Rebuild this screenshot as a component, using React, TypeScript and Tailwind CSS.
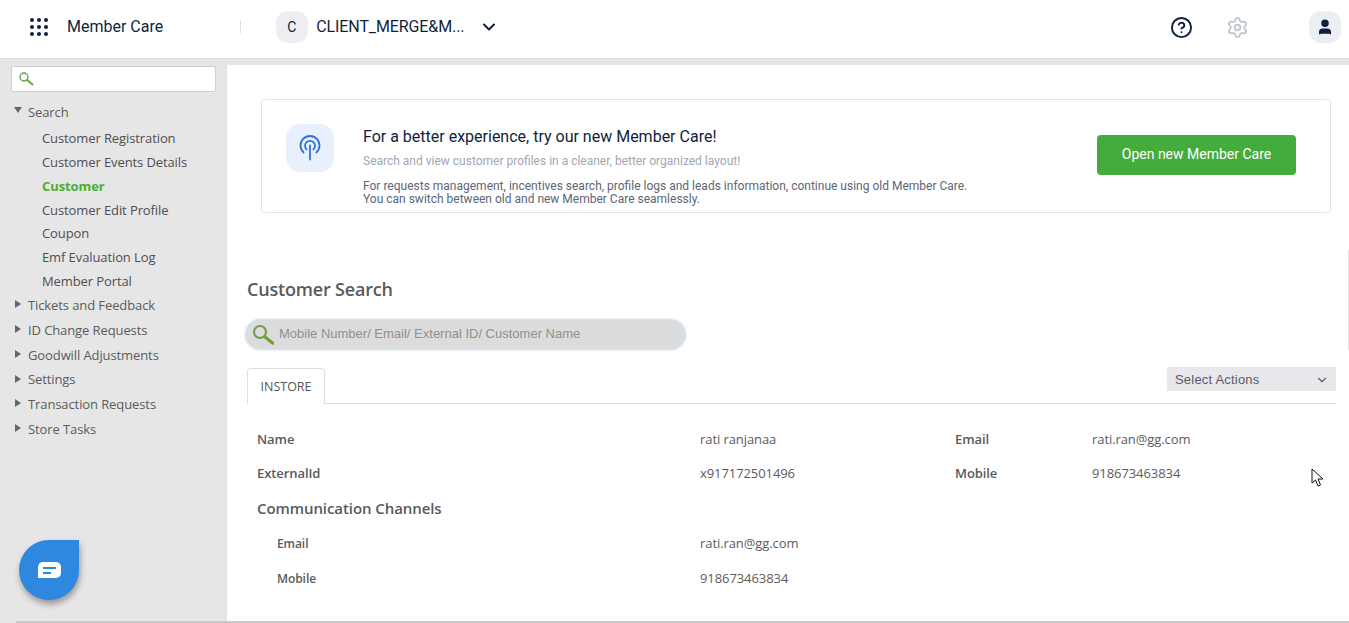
import React from 'react';
import { ChevronDown, CircleHelp, Settings, User } from 'lucide-react';

const sideItems = [
  { label: 'Customer Registration' },
  { label: 'Customer Events Details' },
  { label: 'Customer', active: true },
  { label: 'Customer Edit Profile' },
  { label: 'Coupon' },
  { label: 'Emf Evaluation Log' },
  { label: 'Member Portal' },
];

const sideGroups = ['Tickets and Feedback', 'ID Change Requests', 'Goodwill Adjustments', 'Settings', 'Transaction Requests', 'Store Tasks'];

const Lens: React.FC<{ size: number }> = ({ size }) => (
  <svg width={size} height={size} viewBox="0 0 16 16" fill="none">
    <circle cx="6" cy="6" r="4" stroke="#6f9e45" strokeWidth="1.4" />
    <path d="M9 9l5.5 4.5" stroke="#6aa32f" strokeWidth="2" strokeLinecap="round" />
  </svg>
);

const Sidebar = () => (
  <aside className="w-[227px] shrink-0 h-full bg-[#e6e6e6] pl-[11px] pt-px font-['Open_Sans',sans-serif] text-[13px] tracking-[-0.1px] text-[#5b5b5b]">
    <div className="w-[205px] h-[26px] bg-white border border-[#cfcfcf] rounded-[2px] flex items-center pl-1.5">
      <Lens size={16} />
    </div>
    <div className="mt-[11px] flex items-center h-5 pl-[3px]">
      <span className="w-0 h-0 border-l-[4px] border-r-[4px] border-t-[6px] border-l-transparent border-r-transparent border-t-[#666] mb-1.5" />
      <span className="ml-[6px]">Search</span>
    </div>
    <ul className="mt-[3px] pl-[31px] text-[#4e4e55]">
      {sideItems.map((it) => (
        <li key={it.label} className={`h-[23.85px] leading-[24px] ${it.active ? 'font-bold text-[#4caf32]' : ''}`}>{it.label}</li>
      ))}
    </ul>
    <ul className="pt-[0.4px]">
      {sideGroups.map((g) => (
        <li key={g} className="h-[24.8px] flex items-center pl-1">
          <span className="w-0 h-0 border-t-[4px] border-b-[4px] border-l-[6px] border-t-transparent border-b-transparent border-l-[#666] mb-[3px]" />
          <span className="ml-[7px]">{g}</span>
        </li>
      ))}
    </ul>
  </aside>
);

const Header = () => (
  <header className="h-[59px] pb-1 bg-white border-b border-[#dcdcdc] flex items-center font-['Roboto',sans-serif] text-[#0f1f3d]">
    <div className="ml-[30px] grid grid-cols-3 gap-[3px] w-[18px]">
      {Array.from({ length: 9 }).map((_, i) => (
        <span key={i} className="w-1 h-1 rounded-full bg-[#10203f]" />
      ))}
    </div>
    <span className="ml-[19px] text-base">Member Care</span>
    <span className="ml-[77px] w-px h-3 bg-[#dddddd]" />
    <span className="ml-[35px] w-8 h-8 rounded-[12px] bg-[#eceef1] flex items-center justify-center text-sm pr-px">C</span>
    <span className="ml-2 text-base tracking-[-0.1px]">CLIENT_MERGE&amp;M...</span>
    <ChevronDown size={20} strokeWidth={2.4} className="ml-[15px]" />
    <div className="ml-auto flex items-center">
      <CircleHelp size={23} strokeWidth={2} className="text-[#10203f]" />
      <Settings size={23} strokeWidth={1.8} className="ml-[33px] text-[#bcc3cc]" />
      <span className="ml-[60px] mr-2 w-8 h-8 rounded-[12px] bg-[#eceef1] flex items-center justify-center">
        <User size={18} fill="#10203f" className="text-[#10203f]" />
      </span>
    </div>
  </header>
);

const Banner = () => (
  <section className="ml-[34px] mr-[18px] h-[114px] rounded border border-[#e2e4e8] flex items-start font-['Roboto',sans-serif]">
    <div className="ml-6 mt-6 w-12 h-12 rounded-[14px] bg-[#e8f0fe] flex items-center justify-center shrink-0">
      <svg width="24" height="26" viewBox="0 0 24 26" fill="none" stroke="#2f6fe0" strokeWidth="1.8" strokeLinecap="round">
        <path d="M5.6 17.5a9.5 9.5 0 1 1 12.8 0" />
        <path d="M8.6 14.5a5 5 0 1 1 6.8 0" />
        <path d="M12 10.5V24.5" />
      </svg>
    </div>
    <div className="ml-[29px] mt-[27px]">
      <h2 className="text-base leading-5 text-[#101f3c]">For a better experience, try our new Member Care!</h2>
      <p className="mt-1.5 text-xs leading-4 text-[#a0a6b3]">Search and view customer profiles in a cleaner, better organized layout!</p>
      <p className="mt-[11px] text-xs leading-[13px] text-[#5d6577]">
        For requests management, incentives search, profile logs and leads information, continue using old Member Care.
        <br />
        You can switch between old and new Member Care seamlessly.
      </p>
    </div>
    <button className="ml-auto mr-[34px] mt-[35px] w-[199px] h-10 pb-0.5 rounded bg-[#43ac3c] text-white text-sm">Open new Member Care</button>
  </section>
);

const Label: React.FC<{ children: React.ReactNode }> = ({ children }) => (
  <span className="font-semibold text-[#5a5a5a]">{children}</span>
);

const Details = () => (
  <div className="text-[13px] tracking-[-0.08px] text-[#5c5c5c]">
    <div className="pl-[10px] mt-[26px] grid grid-cols-[443px_255px_137px_1fr] h-[20px] items-center">
      <Label>Name</Label><span>rati ranjanaa</span><Label>Email</Label><span>rati.ran@gg.com</span>
    </div>
    <div className="pl-[10px] mt-[14px] grid grid-cols-[443px_255px_137px_1fr] h-[20px] items-center">
      <Label>ExternalId</Label><span>x917172501496</span><Label>Mobile</Label><span>918673463834</span>
    </div>
    <h3 className="pl-[10px] mt-[14px] text-[15px] leading-5 font-semibold text-[#5a5a5a]">Communication Channels</h3>
    <div className="pl-[30px] mt-4 grid grid-cols-[423px_1fr] h-[20px] items-center">
      <span className="text-xs font-semibold text-[#5a5a5a]">Email</span><span>rati.ran@gg.com</span>
    </div>
    <div className="pl-[30px] mt-[15px] grid grid-cols-[423px_1fr] h-[20px] items-center">
      <span className="text-xs font-semibold text-[#5a5a5a]">Mobile</span><span>918673463834</span>
    </div>
  </div>
);

const CustomerSearch = () => (
  <section className="ml-5 mr-[13px] mt-[63px] font-['Open_Sans',sans-serif]">
    <h2 className="text-lg leading-[26px] font-semibold tracking-[-0.18px] text-[#5a5a5a]">Customer Search</h2>
    <div className="-ml-0.5 mt-[17px] w-[441px] h-[31px] rounded-full bg-[#dcdcdc] border border-[#d5e3f0] shadow-[0_0_3px_#cfe2f5] flex items-center pl-[5px] font-['Liberation_Sans',sans-serif] text-[13px] text-[#918f8f]">
      <Lens size={24} />
      <span className="ml-[4px] pb-0.5">Mobile Number/ Email/ External ID/ Customer Name</span>
    </div>
    <div className="mt-[18px] h-[36px] border-b border-[#dddddd] flex items-start justify-between">
      <div className="w-[78px] h-[36px] pt-0.5 bg-white border border-b-0 border-[#dddddd] rounded-t flex items-center justify-center text-[12.5px] text-[#555]">INSTORE</div>
      <div className="w-[169px] h-6 -mt-px pt-0.5 bg-[#e7e7ec] flex items-center justify-between pl-2 pr-[7px] font-['Liberation_Sans',sans-serif] text-[13px] tracking-[0.2px] text-[#5c5c66]">
        <span>Select Actions</span>
        <ChevronDown size={14} />
      </div>
    </div>
    <Details />
  </section>
);

export default function App() {
  return (
    <div className="relative w-[1349px] h-[623px] overflow-hidden bg-white">
      <Header />
      <div className="h-[6px] bg-[#e6e6e6]" />
      <div className="flex h-[558px]">
        <Sidebar />
        <main className="flex-1 bg-white pt-[34px]">
          <Banner />
          <CustomerSearch />
        </main>
      </div>

      {/* chat bubble */}
      <div className="absolute left-[19px] top-[540px] w-[60px] h-[60px] bg-[#2e88e0] rounded-full rounded-tr-[6px] shadow-[1px_4px_6px_rgba(0,0,0,0.35)] flex items-center justify-center">
        <span className="w-[23px] h-[16px] bg-white rounded-[5px] rounded-bl-none flex flex-col justify-center gap-[3px] pl-[5px]">
          <span className="block w-[13px] h-[2px] bg-[#2e88e0]" />
          <span className="block w-[8px] h-[2px] bg-[#2e88e0]" />
        </span>
      </div>

      {/* mouse pointer */}
      <svg className="absolute left-[1311px] top-[468px]" width="14" height="20" viewBox="0 0 14 20" fill="white" stroke="#111" strokeWidth="1">
        <path d="M1 1v14l3.5-3 2.5 6 2.5-1-2.5-6h5z" />
      </svg>

      {/* bottom scrollbar */}
      <div className="absolute left-4 right-0 bottom-0 h-0.5 bg-[#c8c8c8]" />
      <div className="absolute right-0 top-[250px] w-px h-[100px] bg-[#e4e4e4]" />
    </div>
  );
}
